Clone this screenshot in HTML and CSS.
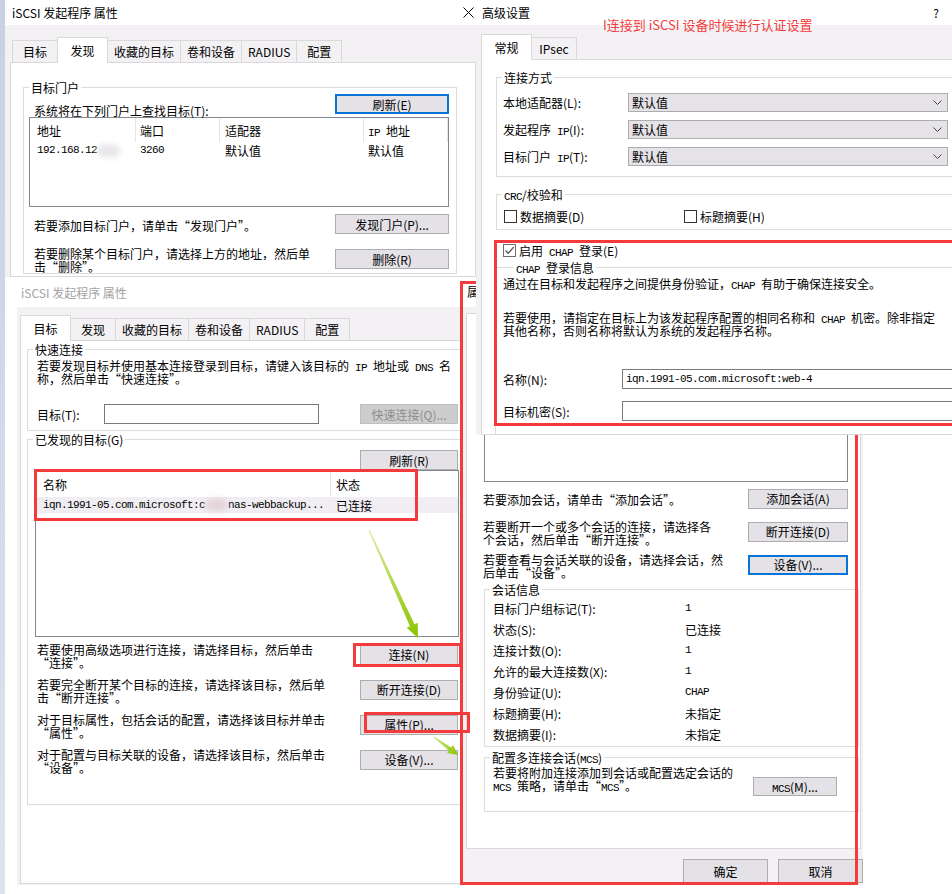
FILE: index.html
```html
<!DOCTYPE html>
<html lang="zh-CN">
<head>
<meta charset="utf-8">
<title>iSCSI 发起程序 属性</title>
<link rel="stylesheet" href="styles.css">
</head>
<body>
<div class="desk-edge"></div>

<!-- Window A: 发现 tab -->
<section class="win win-a">
  <header class="titlebar tb-a">
    <span>iSCSI 发起程序 属性</span>
    <svg class="close" width="11" height="11" viewBox="0 0 11 11"><path d="M0.5 0.5L10.5 10.5M10.5 0.5L0.5 10.5" stroke="#000" stroke-width="1" fill="none"/></svg>
  </header>
  <div class="wbody body-a">
    <nav class="tabs tabs-a">
      <span class="tab">目标</span><span class="tab sel">发现</span><span class="tab">收藏的目标</span><span class="tab">卷和设备</span><span class="tab">RADIUS</span><span class="tab">配置</span>
    </nav>
    <div class="panel panel-a">
      <fieldset class="grp grp-a">
        <legend>目标门户</legend>
        <div class="gin gin-a">
          <div class="row-top">
            <span class="txt-bottom">系统将在下列门户上查找目标(T):</span>
            <span class="btn btn-a focus">刷新(E)</span>
          </div>
          <div class="list list-a">
            <div class="grid-a lhead"><span>地址</span><span>端口</span><span>适配器</span><span><span class="hx"><span class="m">IP </span>地址</span></span></div>
            <div class="grid-a lrow"><span><span class="m">192.168.12</span><i class="blur"></i></span><span class="m">3260</span><span>默认值</span><span>默认值</span></div>
          </div>
          <div class="arow arow-a1"><span class="txt">若要添加目标门户，请单击“发现门户”。</span><span class="btn btn-a">发现门户(P)...</span></div>
          <div class="arow arow-a2"><span class="txt">若要删除某个目标门户，请选择上方的地址，然后单<br>击“删除”。</span><span class="btn btn-a">删除(R)</span></div>
        </div>
      </fieldset>
    </div>
  </div>
</section>

<!-- Window B: 目标 tab -->
<section class="win win-b">
  <header class="titlebar tb-b"><span>iSCSI 发起程序 属性</span></header>
  <div class="wbody body-b">
    <nav class="tabs tabs-b">
      <span class="tab sel">目标</span><span class="tab">发现</span><span class="tab">收藏的目标</span><span class="tab">卷和设备</span><span class="tab">RADIUS</span><span class="tab">配置</span>
    </nav>
    <div class="panel panel-b">
      <fieldset class="grp grp-b1">
        <legend>快速连接</legend>
        <div class="gin gin-b1">
          <p class="para">若要发现目标并使用基本连接登录到目标，请键入该目标的<span class="m"> IP </span>地址或<span class="m"> DNS </span>名<br>称，然后单击“快速连接”。</p>
          <div class="qrow">
            <span class="qlbl">目标(T):</span>
            <span class="input qinput"></span>
            <span class="btn btn-b dis">快速连接(Q)...</span>
          </div>
        </div>
      </fieldset>
      <fieldset class="grp grp-b2">
        <legend>已发现的目标(G)</legend>
        <div class="gin gin-b2">
          <div class="refresh-row"><span class="btn btn-b">刷新(R)</span></div>
          <div class="list list-b">
            <div class="grid-b lhead-b"><span>名称</span><span>状态</span></div>
            <div class="grid-b lrow-b"><span><span class="m">iqn.1991-05.com.microsoft:c</span><i class="blur blur-b"></i><span class="m">nas-webbackup...</span></span><span>已连接</span></div>
          </div>
          <div class="arow arow-b"><span class="txt">若要使用高级选项进行连接，请选择目标，然后单击<br>“连接”。</span><span class="btn btn-b">连接(N)</span></div>
          <div class="arow arow-b"><span class="txt">若要完全断开某个目标的连接，请选择该目标，然后单<br>击“断开连接”。</span><span class="btn btn-b">断开连接(D)</span></div>
          <div class="arow arow-b"><span class="txt">对于目标属性，包括会话的配置，请选择该目标并单击<br>“属性”。</span><span class="btn btn-b">属性(P)...</span></div>
          <div class="arow arow-b"><span class="txt">对于配置与目标关联的设备，请选择该目标，然后单击<br>“设备”。</span><span class="btn btn-b">设备(V)...</span></div>
        </div>
      </fieldset>
    </div>
  </div>
</section>

<!-- Window C: 属性 -->
<section class="win win-c">
  <header class="titlebar tb-c"><span>属性</span></header>
  <div class="wbody body-c">
    <nav class="tabs tabs-c">
      <span class="tab sel">会话</span><span class="tab">门户组</span>
    </nav>
    <div class="panel panel-c">
      <div class="list list-c"></div>
      <div class="arow arow-c"><span class="txt">若要添加会话，请单击“添加会话”。</span><span class="btn btn-c">添加会话(A)</span></div>
      <div class="arow arow-c"><span class="txt">若要断开一个或多个会话的连接，请选择各<br>个会话，然后单击“断开连接”。</span><span class="btn btn-c">断开连接(D)</span></div>
      <div class="arow arow-c"><span class="txt">若要查看与会话关联的设备，请选择会话，然<br>后单击“设备”。</span><span class="btn btn-c focus">设备(V)...</span></div>
      <fieldset class="grp grp-c1">
        <legend>会话信息</legend>
        <div class="gin gin-c1 kv">
          <span>目标门户组标记(T):</span><span class="m">1</span>
          <span>状态(S):</span><span>已连接</span>
          <span>连接计数(O):</span><span class="m">1</span>
          <span>允许的最大连接数(X):</span><span class="m">1</span>
          <span>身份验证(U):</span><span class="m">CHAP</span>
          <span>标题摘要(H):</span><span>未指定</span>
          <span>数据摘要(I):</span><span>未指定</span>
        </div>
      </fieldset>
      <fieldset class="grp grp-c2">
        <legend>配置多连接会话(<span class="m">MCS</span>)</legend>
        <div class="gin gin-c2">
          <span class="mcs-txt">若要将附加连接添加到会话或配置选定会话的<br><span class="m">MCS </span>策略，请单击“<span class="m">MCS</span>”。</span>
          <span class="btn btn-mcs"><span class="bx"><span class="m">MCS</span>(M)...</span></span>
        </div>
      </fieldset>
    </div>
    <div class="okrow"><span class="btn btn-ok">确定</span><span class="btn btn-ok">取消</span></div>
  </div>
</section>
<div class="mark mark-c"></div>

<!-- Window D: 高级设置 -->
<section class="win win-d">
  <header class="titlebar tb-d"><span>高级设置</span><span class="help">?</span></header>
  <div class="wbody body-d">
    <nav class="tabs tabs-d">
      <span class="tab sel">常规</span><span class="tab">IPsec</span>
    </nav>
    <div class="panel panel-d">
      <fieldset class="grp grp-d1">
        <legend>连接方式</legend>
        <div class="gin gin-d1">
          <div class="srow"><span class="slbl">本地适配器(L):</span><span class="select"><span>默认值</span><svg width="9" height="5" viewBox="0 0 9 5"><path d="M0.5 0.5L4.5 4.5L8.5 0.5" stroke="#444" fill="none"/></svg></span></div>
          <div class="srow"><span class="slbl">发起程序<span class="m"> IP</span>(I):</span><span class="select"><span>默认值</span><svg width="9" height="5" viewBox="0 0 9 5"><path d="M0.5 0.5L4.5 4.5L8.5 0.5" stroke="#444" fill="none"/></svg></span></div>
          <div class="srow"><span class="slbl">目标门户<span class="m"> IP</span>(T):</span><span class="select"><span>默认值</span><svg width="9" height="5" viewBox="0 0 9 5"><path d="M0.5 0.5L4.5 4.5L8.5 0.5" stroke="#444" fill="none"/></svg></span></div>
        </div>
      </fieldset>
      <fieldset class="grp grp-d2">
        <legend><span class="m">CRC</span>/校验和</legend>
        <div class="gin gin-d2">
          <label class="chk chk-w"><span class="cb"></span><span>数据摘要(D)</span></label>
          <label class="chk"><span class="cb"></span><span>标题摘要(H)</span></label>
        </div>
      </fieldset>
      <label class="chk chk-chap"><span class="cb on"><svg width="11" height="11" viewBox="0 0 11 11"><path d="M1.5 5.5L4.2 8.2L9.8 2" stroke="#5a5a5a" stroke-width="1.3" fill="none"/></svg></span><span>启用<span class="m"> CHAP </span>登录(E)</span></label>
      <fieldset class="grp grp-d3">
        <legend><span class="m">CHAP </span>登录信息</legend>
        <div class="gin gin-d3">
          <p class="para">通过在目标和发起程序之间提供身份验证，<span class="m">CHAP </span>有助于确保连接安全。</p>
          <p class="para para-gap">若要使用，请指定在目标上为该发起程序配置的相同名称和<span class="m"> CHAP </span>机密。除非指定<br>其他名称，否则名称将默认为系统的发起程序名称。</p>
          <div class="frow frow-1"><span class="flbl">名称(N):</span><span class="input finput"><span class="m">iqn.1991-05.com.microsoft:web-4</span></span></div>
          <div class="frow frow-2"><span class="flbl">目标机密(S):</span><span class="input finput"></span></div>
        </div>
      </fieldset>
    </div>
  </div>
</section>

<!-- annotations -->
<div class="mark mark-d"></div>
<div class="note">I连接到 iSCSI 设备时候进行认证设置</div>
<div class="mark mark-list"></div>
<div class="mark mark-conn"></div>
<div class="mark mark-prop"></div>
<svg class="arrows" width="952" height="894" viewBox="0 0 952 894">
  <defs>
    <linearGradient id="ga" x1="369" y1="530" x2="418" y2="638" gradientUnits="userSpaceOnUse">
      <stop offset="0" stop-color="#d8ec9a"/>
      <stop offset="1" stop-color="#8cc400"/>
    </linearGradient>
    <linearGradient id="gb" x1="434" y1="737" x2="458" y2="755" gradientUnits="userSpaceOnUse">
      <stop offset="0" stop-color="#cfe68a"/>
      <stop offset="1" stop-color="#8cc400"/>
    </linearGradient>
  </defs>
  <polygon fill="url(#ga)" points="368.5,530.2 409.9,626.2 406.7,627.7 418,638 417.7,622.7 414.5,624.2 369.5,529.8"/>
  <polygon fill="url(#gb)" points="433.7,737.4 448.8,750.6 447,753 458,755 453,745 451.2,747.4 434.3,736.6"/>
</svg>
</body>
</html>
```

FILE: styles.css
```css
* { box-sizing: border-box; }
html, body { margin: 0; padding: 0; }
body {
  width: 952px;
  height: 894px;
  position: relative;
  overflow: hidden;
  background: #fff;
  font-family: "Noto Sans CJK SC", "Noto Sans", sans-serif;
  font-size: 12px;
  line-height: 13px;
  color: #000;
}
p { margin: 0; }
.m {
  font-family: "Liberation Mono", "DejaVu Sans Mono", monospace;
  font-size: 11px;
  letter-spacing: -0.6px;
  line-height: 0;
  white-space: pre;
}
.lrow .m, .lrow-b .m, .kv .m, .finput .m { line-height: 13px; }

.desk-edge {
  position: absolute; left: 0; top: 0; width: 5px; height: 894px;
  background: linear-gradient(#c8d0e2, #dde3ee);
}

/* windows */
.win { position: absolute; z-index: 0; display: flex; flex-direction: column; overflow: hidden; }
.win-a { left: 5px; top: 0; width: 486px; height: 277px; }
.win-b { left: 17px; top: 277px; width: 443px; height: 608px; }
.win-c { left: 460px; top: 281px; width: 403px; height: 604px; }
.win-d { left: 476px; top: 0; width: 476px; height: 435px; }

.titlebar { flex: none; display: flex; align-items: center; background: #fff; white-space: nowrap; }
.tb-a { height: 25px; padding-left: 7px; }
.tb-b { height: 30px; padding-left: 4px; color: #a3a3a3; }
.tb-c { height: 26px; padding-left: 7px; align-items: flex-start; padding-top: 4px; }
.tb-d { height: 25px; padding-left: 6px; }
.close { margin-left: auto; margin-right: 17px; flex: none; }
.help { margin-left: auto; margin-right: 13px; font-size: 12px; }

.wbody { flex: 1; display: flex; flex-direction: column; align-items: flex-start; background: #f3f1f4; min-height: 0; }
.body-a { padding-top: 12px; }
.body-b { padding-top: 8px; }
.body-c { padding-top: 6px; }
.body-d { padding-top: 9px; }

/* tabs */
.tabs { display: flex; align-items: flex-end; height: 25px; flex: none; position: relative; z-index: 1; }
.tabs-a { padding-left: 7px; }
.tabs-b { padding-left: 3px; }
.tabs-c { padding-left: 6px; }
.tabs-d { padding-left: 5px; }
.tab {
  height: 22px; min-width: 46px; padding: 0 6px;
  border: 1px solid #d9d9d9; border-bottom: 0; margin-right: -1px;
  display: flex; align-items: center; justify-content: center;
  background: #f3f1f4; white-space: nowrap;
}
.tab.sel { height: 26px; min-width: 51px; margin-bottom: -1px; background: #fff; position: relative; z-index: 2; }

.panel { background: #fff; border: 1px solid #d9d9d9; min-height: 0; }
.panel-a { margin-left: 5px; width: 466px; flex: 1; }
.panel-b { margin-left: 3px; width: 446px; flex: 1; margin-bottom: 1px; }
.panel-c { margin-left: 6px; width: 395px; height: 511px; flex: none; }
.panel-d { margin-left: 5px; width: 482px; flex: 1; }

/* group boxes */
.grp { margin: 0; padding: 0; border: 1px solid #dcdcdc; min-width: 0; }
.grp > legend { padding: 0 2px; margin-left: 5px; line-height: 13px; white-space: nowrap; }

/* buttons & inputs */
.btn {
  flex: none; height: 20px;
  border: 1px solid #adadad; background: #e5e2e7;
  display: flex; align-items: center; justify-content: center; white-space: nowrap;
}
.btn.focus { border: 2px solid #0a74d6; }
.btn.dis { background: #cdcdcd; border-color: #bfbfbf; color: #8d8d8d; }
.btn-a { width: 114px; }
.btn-b { width: 98px; }
.btn-c { width: 100px; }
.input { display: flex; align-items: center; height: 20px; border: 1px solid #7a7a7a; background: #fff; flex: none; }

.list { border: 1px solid #828790; background: #fff; flex: none; }
.blur { display: inline-block; width: 23px; height: 12px; vertical-align: middle; background: #e6e4e6; filter: blur(3px); border-radius: 6px; }
.blur-b { background: #e3d3d8; }

.arow { display: flex; align-items: center; justify-content: space-between; }
.arow .txt { padding-top: 2px; }

/* window A */
.grp-a { margin: 18px 0 0 12px; width: 434px; }
.gin-a { padding: 0 7px 0 10px; }
.row-top { display: flex; justify-content: space-between; height: 23px; }
.txt-bottom { align-self: flex-end; }
.list-a { margin-left: -5px; width: 420px; height: 90px; }
.grid-a { display: grid; grid-template-columns: 106px 84px 144px 84px; }
.lhead { height: 24px; }
.lhead > span { display: flex; align-items: center; padding-left: 4px; border-right: 1px solid #e5e5e5; white-space: nowrap; }
.lhead > span:first-child { padding-left: 7px; }
.lhead > span:nth-child(3) { padding-left: 5px; }
.lrow { height: 17px; }
.lrow > span { display: flex; align-items: center; padding-left: 4px; white-space: nowrap; }
.lrow > span:first-child { padding-left: 7px; }
.lrow > span:nth-child(3) { padding-left: 5px; }
.arow-a1 { margin-top: 7px; }
.arow-a2 { margin-top: 11px; }

/* window B */
.grp-b1 { margin: 2px 0 0 6px; width: 438px; }
.gin-b1 { padding: 3px 6px 6px 9px; }
.qrow { display: flex; align-items: center; margin-top: 19px; height: 20px; }
.qlbl { width: 67px; flex: none; }
.qinput { width: 215px; }
.qrow .btn { margin-left: auto; }
.grp-b2 { margin: 2px 0 0 6px; width: 438px; }
.gin-b2 { padding: 0 6px 27px 9px; }
.refresh-row { display: flex; justify-content: flex-end; margin-top: 4px; }
.list-b { margin-left: -2px; margin-right: -1px; height: 167px; }
.grid-b { display: grid; grid-template-columns: 295px 1fr; }
.lhead-b { height: 26px; }
.lhead-b > span { display: flex; align-items: center; padding-left: 7px; }
.lhead-b > span:first-child { border-right: 1px solid #e5e5e5; }
.lhead-b > span:last-child { padding-left: 5px; }
.lrow-b { height: 16px; background: #f0eef2; }
.lrow-b > span { display: flex; align-items: center; padding-left: 7px; white-space: nowrap; }
.lrow-b > span:last-child { padding-left: 5px; }
.arow-b { height: 35px; }

/* window C */
.list-c { margin: 56px 12px 0 17px; height: 87px; }
.arow-c { height: 33px; padding: 0 12px 0 16px; }
.grp-c1 { margin: 2px 1px 0 17px; }
.gin-c1 { padding: 2px 0 1px 8px; }
.kv { display: grid; grid-template-columns: 192px 1fr; grid-auto-rows: 21px; align-items: center; }
.grp-c2 { margin: 4px 1px 0 17px; }
.gin-c2 { display: flex; align-items: flex-start; padding: 2px 0 15px 8px; }
.mcs-txt { width: 240px; flex: none; }
.btn-mcs { width: 84px; height: 19px; margin: 11px 0 0 20px; }
.okrow { align-self: stretch; display: flex; justify-content: flex-end; gap: 10px; margin-top: 10px; }
.btn-ok { width: 85px; height: 24px; }

/* window D */
.grp-d1 { margin: 11px 0 0 14px; width: 462px; }
.gin-d1 { padding: 5px 0 6px 6px; }
.srow { display: flex; align-items: center; height: 27px; }
.slbl { width: 125px; flex: none; white-space: nowrap; }
.select {
  width: 320px; height: 19px; border: 1px solid #adadad; background: #e6e3e8;
  display: flex; align-items: center; justify-content: space-between; padding: 0 5px 0 3px;
}
.grp-d2 { margin: 11px 0 0 14px; width: 462px; }
.gin-d2 { display: flex; padding: 9px 0 6px 7px; }
.chk { display: flex; align-items: center; height: 13px; white-space: nowrap; }
.chk-w { width: 180px; }
.cb { width: 13px; height: 13px; border: 1px solid #333; background: #fff; margin-right: 3px; flex: none; display: flex; align-items: center; justify-content: center; }
.cb.on { border-color: #6d6d6d; }
.chk-chap { margin: 14px 0 0 21px; }
.grp-d3 { margin: 4px 0 0 13px; width: 463px; }
.grp-d3 > legend { margin-left: 18px; }
.gin-d3 { padding: 3px 0 30px 7px; }
.para-gap { margin-top: 21px; }
.frow { display: flex; align-items: center; height: 20px; }
.frow-1 { margin-top: 32px; }
.frow-2 { margin-top: 12px; }
.flbl { width: 119px; flex: none; }
.finput { width: 340px; padding-left: 3px; }

/* annotations */
.mark { position: absolute; border: 3px solid #f33b3b; }
.mark-c { left: 460px; top: 281px; width: 398px; height: 604px; }
.mark-d { left: 494px; top: 240px; width: 470px; height: 186px; }
.mark-list { left: 34px; top: 469px; width: 384px; height: 52px; }
.mark-conn { left: 353px; top: 643px; width: 109px; height: 24px; }
.mark-prop { left: 364px; top: 712px; width: 106px; height: 21px; }
.note {
  position: absolute; left: 603px; top: 17px;
  color: #f23c3c; font-size: 13px; line-height: 15px; white-space: nowrap;
}
.arrows { position: absolute; left: 0; top: 0; pointer-events: none; }
```
